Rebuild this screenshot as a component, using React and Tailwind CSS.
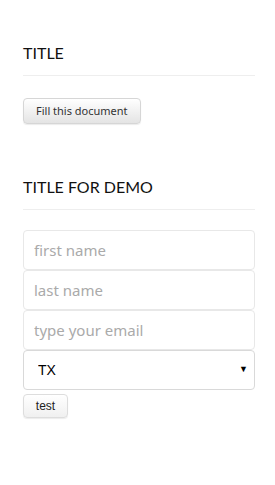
import React from 'react';

const Field = ({ placeholder }) => (
  <input
    type="text"
    placeholder={placeholder}
    className="block w-full h-10 rounded border border-[#e8e8e8] bg-white px-[10px] font-['Noto_Sans',sans-serif] text-[15px] text-[#333] placeholder:text-[#aaa] outline-none"
  />
);

export default function App() {
  return (
    <div className="min-h-[485px] bg-white pl-[23px] pr-[20px] pt-[44px] font-['Noto_Sans',sans-serif]">
      <section>
        <h2 className="font-['Lato',sans-serif] text-[16px] leading-[18px] text-[#111] pb-[13px] border-b border-[#eee]">
          TITLE
        </h2>
        <button className="mt-[22px] h-[26px] px-3 rounded-sm border border-[#d6d6d6] bg-gradient-to-b from-white to-[#e4e4e4] text-[11px] text-[#333] shadow-[0_1px_1px_rgba(0,0,0,0.08)]">
          Fill this document
        </button>
      </section>

      <section className="mt-[54px]">
        <h2 className="font-['Lato',sans-serif] text-[16px] leading-[18px] text-[#111] pb-[13px] border-b border-[#eee]">
          TITLE FOR DEMO
        </h2>
        <form className="mt-[20px] flex flex-col items-start" onSubmit={(e) => e.preventDefault()}>
          <Field placeholder="first name" />
          <Field placeholder="last name" />
          <Field placeholder="type your email" />
          <div className="relative w-full">
            <select
              defaultValue="TX"
              className="block w-full h-10 appearance-none rounded border border-[#d9d9d9] bg-white pl-[14px] font-['Liberation_Sans',Arial,sans-serif] text-[14px] text-black outline-none"
            >
              <option value="TX">TX</option>
              <option value="CA">CA</option>
              <option value="NY">NY</option>
            </select>
            <span className="pointer-events-none absolute right-[7px] top-[13px] font-['Liberation_Sans',Arial,sans-serif] text-[9px] text-black">
              ▼
            </span>
          </div>
          <button
            type="submit"
            className="mt-1 h-[24px] w-[45px] rounded-sm border border-[#ddd] bg-gradient-to-b from-white to-[#f0f0f0] font-['Liberation_Sans',Arial,sans-serif] text-[12px] text-[#222] shadow-[0_1px_1px_rgba(0,0,0,0.08)]"
          >
            test
          </button>
        </form>
      </section>
    </div>
  );
}
